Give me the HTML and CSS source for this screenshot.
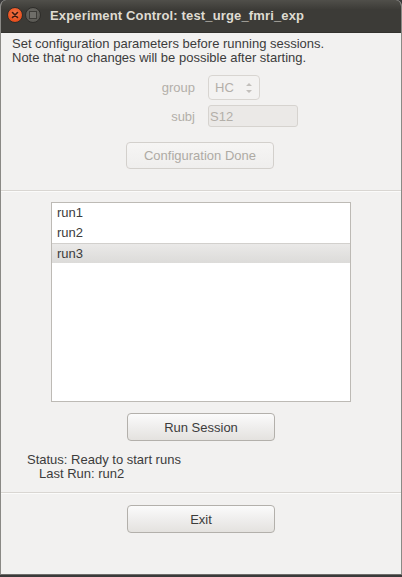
FILE: index.html
```html
<!DOCTYPE html>
<html>
<head>
<meta charset="utf-8">
<link rel="stylesheet" href="styles.css">
</head>
<body>
<div class="window">
  <div class="titlebar">
    <span class="btn-close"><svg width="14" height="14" viewBox="0 0 14 14"><path d="M4.5 4.5 L9.5 9.5 M9.5 4.5 L4.5 9.5" stroke="#3a1a10" stroke-width="1.6" stroke-linecap="round"/></svg></span>
    <span class="btn-min"><span class="sq"></span></span>
    <span class="title">Experiment Control: test_urge_fmri_exp</span>
  </div>
  <div class="content">
    <div class="intro">Set configuration parameters before running sessions.<br>Note that no changes will be possible after starting.</div>
    <div class="form">
      <div class="frow"><span class="flabel">group</span><span class="spin"><span class="spin-val">HC</span><span class="arrows"><svg width="8" height="14" viewBox="0 0 8 14"><path d="M1 5 L4 2 L7 5 Z M1 9 L4 12 L7 9 Z" fill="#c2bfbb"/></svg></span></span></div>
      <div class="frow"><span class="flabel">subj</span><span class="entry">S12</span></div>
    </div>
    <div class="btnrow"><span class="button disabled">Configuration Done</span></div>
  </div>
  <div class="sep"></div>
  <div class="content2">
    <div class="list">
      <div class="item">run1</div>
      <div class="item">run2</div>
      <div class="item selected">run3</div>
    </div>
    <div class="btnrow"><span class="button">Run Session</span></div>
    <div class="status">Status: Ready to start runs</div>
    <div class="lastrun">Last Run: run2</div>
  </div>
  <div class="sep sep2"></div>
  <div class="btnrow exitrow"><span class="button">Exit</span></div>
</div>
</body>
</html>
```
FILE: styles.css
```css
html, body {
  margin: 0;
  padding: 0;
  background: #3a3a3a;
}
body {
  width: 402px;
  height: 577px;
  overflow: hidden;
  font-family: "Liberation Sans", "Noto Sans", sans-serif;
  font-size: 13px;
  color: #3c3c3c;
}
.window {
  width: 400px;
  height: 574px;
  background: #f2f1f0;
  border-left: 1px solid #8a8985;
  border-right: 1px solid #8a8985;
  border-bottom: 1px solid #6e6d6a;
  border-radius: 6px 6px 0 0;
  overflow: hidden;
  display: flex;
  flex-direction: column;
}
.titlebar {
  height: 33px;
  flex: none;
  background: linear-gradient(#504f4a, #3c3b37 30%, #3c3b37);
  display: flex;
  align-items: center;
  padding-left: 6px;
  border-bottom: 1px solid #33322e;
  box-sizing: border-box;
}
.btn-close {
  width: 16px;
  height: 16px;
  border-radius: 50%;
  background: radial-gradient(circle at 50% 40%, #f37a4d, #e8511f 65%, #c8421a);
  border: 1px solid #2e2d2a;
  box-sizing: border-box;
  display: flex;
  align-items: center;
  justify-content: center;
  margin-top: -2px;
}
.btn-close svg { display: block; }
.btn-min {
  width: 16px;
  height: 16px;
  border-radius: 50%;
  background: radial-gradient(circle at 50% 40%, #6a6964, #55544f);
  border: 1px solid #2e2d2a;
  box-sizing: border-box;
  display: flex;
  align-items: center;
  justify-content: center;
  margin-left: 2px;
  margin-top: -2px;
}
.btn-min .sq {
  width: 6px;
  height: 6px;
  border: 1px solid #3d3c38;
  background: #6f6e69;
}
.title {
  margin-left: 9px;
  margin-top: -1px;
  color: #dfdbd2;
  font-weight: bold;
  font-size: 13px;
  letter-spacing: 0.15px;
}
.content {
  padding: 4px 11px 0 11px;
}
.intro {
  line-height: 14px;
}
.form {
  margin-top: 10px;
  display: flex;
  flex-direction: column;
  gap: 5px;
}
.frow {
  display: flex;
  align-items: center;
}
.flabel {
  width: 196px;
  text-align: right;
  color: #b3afa9;
  padding-right: 13px;
  box-sizing: border-box;
}
.spin {
  width: 52px;
  height: 25px;
  box-sizing: border-box;
  border: 1px solid #d8d5d1;
  border-radius: 4px;
  background: #f3f2f1;
  color: #b3afa9;
  display: flex;
  align-items: center;
  justify-content: space-between;
  padding: 0 6px 0 6px;
}
.arrows svg { display: block; }
.entry {
  width: 90px;
  height: 22px;
  box-sizing: border-box;
  border: 1px solid #d6d3cf;
  border-radius: 3px;
  background: #ebe9e7;
  color: #b3afa9;
  display: flex;
  align-items: center;
  padding-left: 1px;
}
.btnrow {
  display: flex;
  justify-content: center;
  margin-top: 15px;
}
.content .btnrow { padding-right: 2px; }
.button {
  width: 148px;
  height: 28px;
  box-sizing: border-box;
  border: 1px solid #b3b0ab;
  border-radius: 4px;
  background: linear-gradient(#fbfbfb, #efeeed 50%, #e4e2df);
  display: flex;
  align-items: center;
  justify-content: center;
  color: #3c3c3c;
}
.button.disabled {
  height: 27px;
  border-color: #d3d0cc;
  background: linear-gradient(#f6f5f4, #efeeed);
  color: #aeaaa4;
}
.sep {
  height: 1px;
  background: #d9d6d2;
  border-bottom: 1px solid #fbfbfa;
  margin-top: 21px;
}
.content2 {
  padding: 10px 0 0 0;
}
.list {
  margin-left: 50px;
  width: 300px;
  height: 200px;
  box-sizing: border-box;
  border: 1px solid #bdbab5;
  background: #ffffff;
}
.item {
  height: 20px;
  line-height: 20px;
  padding-left: 5px;
  box-sizing: border-box;
}
.item.selected {
  background: linear-gradient(#eae9e8, #dcdbd9);
  border-top: 1px solid #d2d0cd;
  line-height: 19px;
}
.content2 .btnrow {
  margin-top: 11px;
}
.status {
  margin-top: 12px;
  padding-left: 26px;
  line-height: 14px;
}
.lastrun {
  padding-left: 38px;
  line-height: 14px;
}
.sep2 {
  margin-top: 11px;
}
.exitrow {
  margin-top: 11px;
}
```
